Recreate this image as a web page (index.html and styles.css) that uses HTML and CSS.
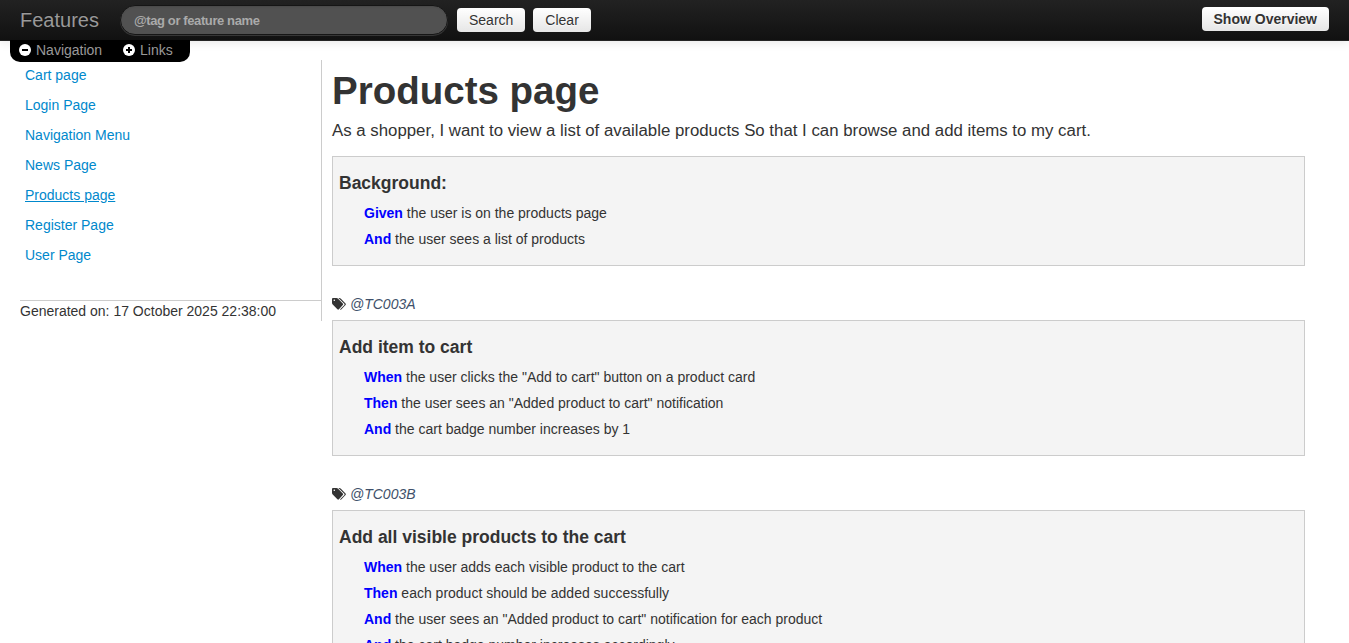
FILE: index.html
```html
<!DOCTYPE html>
<html lang="en">
<head>
<meta charset="utf-8">
<title>Features</title>
<link rel="stylesheet" href="styles.css">
</head>
<body>
<svg class="sprite" width="0" height="0">
  <symbol id="tags" viewBox="0 0 14 12">
    <path fill-rule="evenodd" d="M0 1Q0 0 1 0H4.4Q5.4 0 6.1.7L10.8 5.5Q11.5 6.2 10.8 7L6.9 11.3Q6.2 12 5.4 11.3L.7 6.6Q0 5.8 0 4.9ZM2.3 1.4A.8.8 0 1 0 2.3 3A.8.8 0 1 0 2.3 1.4Z"/>
    <path d="M6.4 0H7.4Q8.2 0 8.9.7L13.5 5.5Q14.2 6.2 13.5 7L9.5 11.3Q8.8 12 8 11.5L12.4 6.9Q12.8 6.2 12.3 5.7Z"/>
  </symbol>
</svg>
<header class="navbar">
  <a class="brand">Features</a>
  <form class="search">
    <input class="search-query" type="text" placeholder="@tag or feature name">
    <button class="btn" type="button">Search</button>
    <button class="btn" type="button">Clear</button>
  </form>
  <button class="btn overview" type="button">Show Overview</button>
  <div class="toggles">
    <a class="toggle nav-toggle"><svg class="round" viewBox="0 0 12 12"><circle cx="6" cy="6" r="6"/><path d="M3 6H9"/></svg>Navigation</a>
    <a class="toggle"><svg class="round" viewBox="0 0 12 12"><circle cx="6" cy="6" r="6"/><path d="M3 6H9M6 3V9"/></svg>Links</a>
  </div>
</header>
<div class="layout">
  <aside class="sidebar">
    <nav class="links">
      <a>Cart page</a><a>Login Page</a><a>Navigation Menu</a><a>News Page</a><a class="current">Products page</a><a>Register Page</a><a>User Page</a>
    </nav>
    <div class="generated">Generated on: 17 October 2025 22:38:00</div>
  </aside>
  <main class="content">
    <h1>Products page</h1>
    <p class="description">As a shopper, I want to view a list of available products So that I can browse and add items to my cart.</p>
    <section class="scenario">
      <h2>Background:</h2>
      <ul class="steps">
        <li><b>Given</b> the user is on the products page</li>
        <li><b>And</b> the user sees a list of products</li>
      </ul>
    </section>
    <div class="tags"><svg class="tag-icon"><use href="#tags"/></svg><i>@TC003A</i></div>
    <section class="scenario">
      <h2>Add item to cart</h2>
      <ul class="steps">
        <li><b>When</b> the user clicks the "Add to cart" button on a product card</li>
        <li><b>Then</b> the user sees an "Added product to cart" notification</li>
        <li><b>And</b> the cart badge number increases by 1</li>
      </ul>
    </section>
    <div class="tags"><svg class="tag-icon"><use href="#tags"/></svg><i>@TC003B</i></div>
    <section class="scenario">
      <h2>Add all visible products to the cart</h2>
      <ul class="steps">
        <li><b>When</b> the user adds each visible product to the cart</li>
        <li><b>Then</b> each product should be added successfully</li>
        <li><b>And</b> the user sees an "Added product to cart" notification for each product</li>
        <li><b>And</b> the cart badge number increases accordingly</li>
      </ul>
    </section>
  </main>
</div>
</body>
</html>
```

FILE: styles.css
```css
* { box-sizing: border-box; }
html, body { height: 100%; }
body {
  margin: 0;
  overflow: hidden;
  font: 14px/20px "Liberation Sans", Arial, sans-serif;
  color: #333;
  background: #fff;
}
.sprite { position: absolute; }
.navbar {
  position: relative;
  display: flex;
  height: 41px;
  padding: 0 20px;
  background: linear-gradient(#222, #111);
  border-bottom: 1px solid #252525;
  box-shadow: 0 1px 10px rgba(0, 0, 0, .1);
}
.brand { width: 100px; padding-top: 10px; font-size: 20px; color: #999; text-shadow: 0 -1px 0 rgba(0, 0, 0, .25); }
.search { display: flex; align-items: flex-start; margin: 0; }
.search-query {
  width: 328px;
  height: 30px;
  margin: 5px 9px 0 0;
  padding: 4px 13px;
  font: bold 13px/20px "Liberation Sans", Arial, sans-serif;
  letter-spacing: -.39px;
  color: #fff;
  background: #515151;
  border: 1px solid #151515;
  border-radius: 15px;
  box-shadow: inset 0 1px 2px rgba(0, 0, 0, .1), 0 1px 0 rgba(255, 255, 255, .15);
}
.search-query::placeholder { color: #aaa; opacity: 1; }
.btn {
  height: 24px;
  margin: 8px 8px 0 0;
  padding: 0 12px;
  font: 14px/24px "Liberation Sans", Arial, sans-serif;
  color: #333;
  text-shadow: 0 1px 1px rgba(255, 255, 255, .75);
  background: linear-gradient(#fff, #e6e6e6);
  border: 0;
  border-radius: 4px;
}
.overview { margin: 7px 0 0 auto; font-weight: bold; }
.toggles {
  position: absolute;
  top: 40px;
  left: 10px;
  display: flex;
  width: 180px;
  height: 22px;
  padding-left: 9px;
  background: #000;
  border-radius: 0 0 10px 10px;
}
.toggle { display: flex; align-items: center; height: 20px; color: #999; }
.nav-toggle { width: 104px; }
.round { width: 12px; height: 12px; margin-right: 5px; fill: #fff; stroke: none; }
.round path { stroke: #000; stroke-width: 2; }
.layout { display: flex; align-items: flex-start; padding: 19px 44px 0 20px; }
.sidebar { width: 302px; flex: none; border-right: 1px solid #ccc; }
.links { display: flex; flex-direction: column; height: 240px; padding-left: 5px; }
.links a { padding: 5px 0; color: #08c; }
.links .current { text-decoration: underline; }
.generated { height: 21px; border-top: 1px solid #ccc; }
.content { flex: 1; padding: 11px 0 0 10px; }
h1 { margin: 0 0 10px; font-size: 38.5px; line-height: 40px; }
.description { margin: 0 0 15px; font-size: 16.82px; line-height: 20px; }
.scenario { padding: 16px 6px 13px; background: #f4f4f4; border: 1px solid #ccc; }
h2 { margin: 0 0 7px; font-size: 17.5px; line-height: 20px; }
.steps { margin: 0; padding: 0 0 0 25px; list-style: none; }
.steps li { height: 26px; padding: 3px 0; }
.steps b { color: #00f; }
.tags { display: flex; align-items: center; margin: 28px 0 6px; color: #40506a; }
.tag-icon { width: 14px; height: 12px; margin-right: 4px; fill: #333; }
```
